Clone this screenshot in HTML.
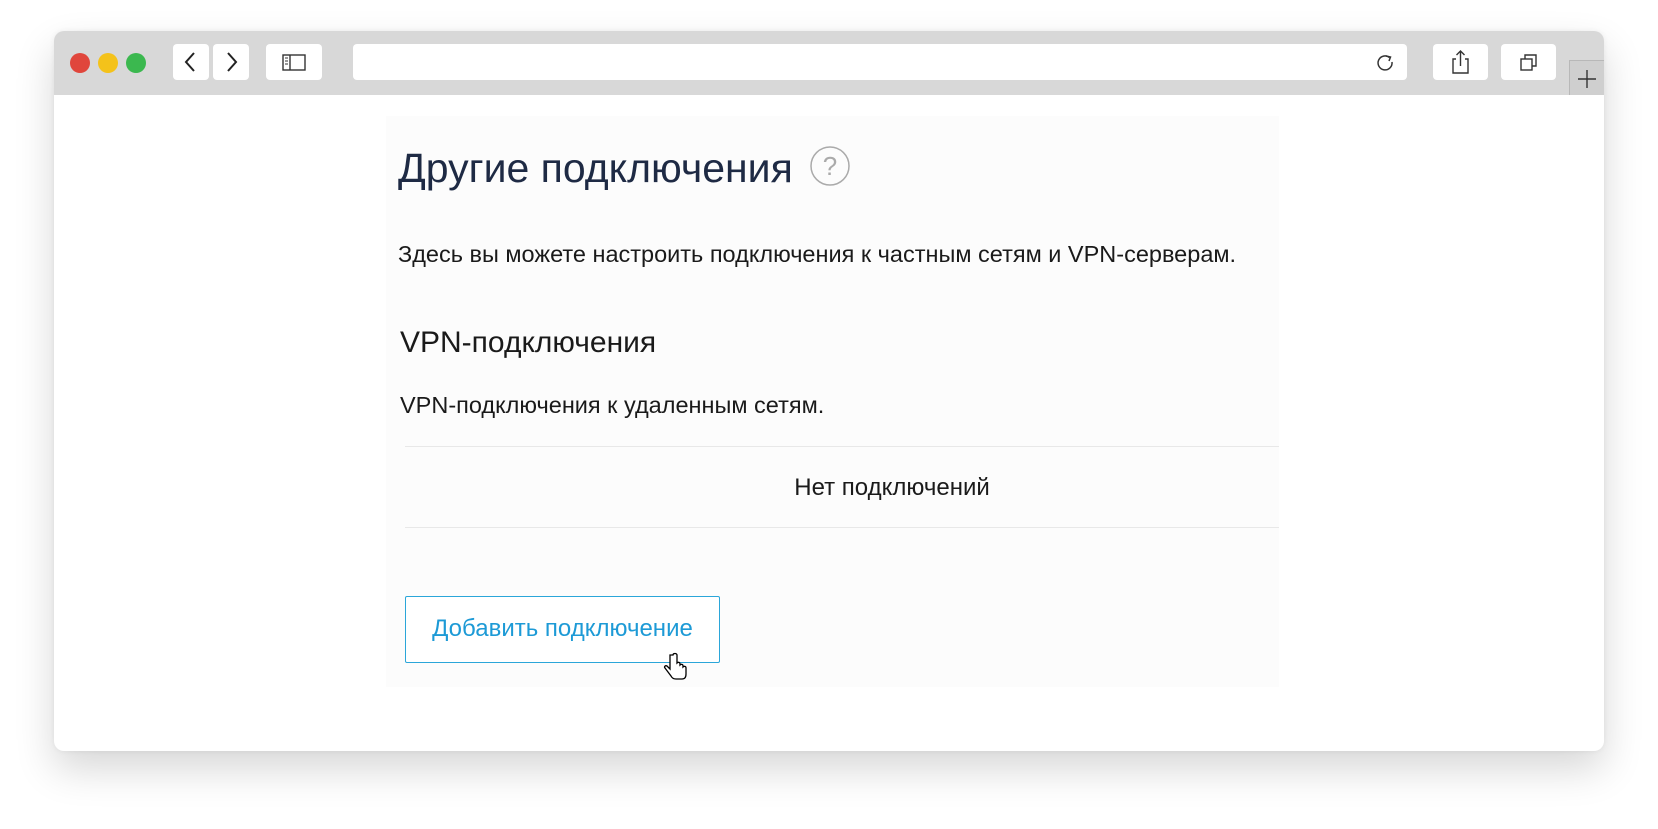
<!DOCTYPE html>
<html><head><meta charset="utf-8"><style>
*{margin:0;padding:0;box-sizing:border-box}
body{width:1658px;height:829px;background:#fff;position:relative;overflow:hidden;font-family:"Liberation Sans",sans-serif}
.win{position:absolute;left:54px;top:31px;width:1550px;height:720px;background:#fff;border-radius:10px;box-shadow:0 18px 40px rgba(0,0,0,.16),0 0 6px rgba(0,0,0,.06);overflow:hidden}
.bar{position:absolute;left:0;top:0;width:100%;height:64px;background:#d8d8d8}
.dot{position:absolute;top:22px;width:20px;height:20px;border-radius:50%}
.btn{position:absolute;top:13px;height:36px;background:#fff;border-radius:4px}
.panel{position:absolute;left:332px;top:85px;width:893px;height:571px;background:#fcfcfc}
.t{position:absolute;color:#1a1a1a;white-space:nowrap}
.line{position:absolute;left:351px;width:874px;height:1px;background:#e8e8e8}
</style></head><body>
<div class="win">
 <div class="bar">
  <div class="dot" style="left:16px;background:#e0463c"></div>
  <div class="dot" style="left:44px;background:#f4c21a"></div>
  <div class="dot" style="left:72px;background:#3bb84f"></div>
  <div class="btn" style="left:119px;width:36px"><svg width="36" height="36"><path d="M21 9 L13 18 L21 27" stroke="#222" stroke-width="2" fill="none"/></svg></div>
  <div class="btn" style="left:159px;width:36px"><svg width="36" height="36"><path d="M15 9 L23 18 L15 27" stroke="#222" stroke-width="2" fill="none"/></svg></div>
  <div class="btn" style="left:212px;width:56px"><svg width="56" height="36"><rect x="17" y="11" width="22" height="15" stroke="#333" stroke-width="1.4" fill="none"/><line x1="24" y1="11" x2="24" y2="26" stroke="#333" stroke-width="1.4"/><path d="M19 14h3M19 17h3M19 20h3" stroke="#333" stroke-width="1"/></svg></div>
  <div class="btn" style="left:299px;width:1054px"><svg style="position:absolute;right:12px;top:8px" width="20" height="20"><path d="M14.5 5.5 A7 7 0 1 0 17 10" stroke="#333" stroke-width="1.5" fill="none"/><path d="M11 4 L15.5 5 L14 9" stroke="#333" stroke-width="1.5" fill="none"/></svg></div>
  <div class="btn" style="left:1379px;width:55px"><svg width="55" height="36"><path d="M23 15h-3v14h15v-14h-3" stroke="#333" stroke-width="1.4" fill="none"/><path d="M27.5 22V7M23.5 11l4-4 4 4" stroke="#333" stroke-width="1.4" fill="none"/></svg></div>
  <div class="btn" style="left:1447px;width:55px"><svg width="55" height="36"><rect x="20" y="15" width="11" height="11" stroke="#333" stroke-width="1.4" fill="none"/><path d="M24 15v-4h11v11h-4" stroke="#333" stroke-width="1.4" fill="none"/></svg></div>
  <div style="position:absolute;left:1515px;top:29px;width:35px;height:35px;background:#cfcfcf;border-left:1px solid #b8b8b8;border-top:1px solid #b8b8b8"><svg width="35" height="35"><path d="M17 9v18M8 18h18" stroke="#333" stroke-width="1.4"/></svg></div>
 </div>
 <div class="panel"></div>
 <div class="t" style="left:344px;top:114px;font-size:41px;color:#1e2a44">Другие подключения</div>
 <svg style="position:absolute;left:755px;top:114px" width="42" height="42"><circle cx="21" cy="21" r="19" stroke="#aaa" stroke-width="1.5" fill="none"/><text x="21" y="30" font-size="26" text-anchor="middle" fill="#aaa" font-family="Liberation Sans">?</text></svg>
 <div class="t" style="left:344px;top:210px;font-size:23.5px">Здесь вы можете настроить подключения к частным сетям и VPN-серверам.</div>
 <div class="t" style="left:346px;top:295px;font-size:30px">VPN-подключения</div>
 <div class="t" style="left:346px;top:361px;font-size:23.5px">VPN-подключения к удаленным сетям.</div>
 <div class="line" style="top:415px"></div>
 <div class="t" style="left:688px;width:300px;text-align:center;top:443px;font-size:24px">Нет подключений</div>
 <div class="line" style="top:496px"></div>
 <div style="position:absolute;left:351px;top:565px;width:315px;height:67px;border:1.5px solid #2ba6d9;border-radius:2px;color:#1d9ad6;font-size:24px;line-height:64px;text-align:center;background:#fff">Добавить подключение</div>
 <svg style="position:absolute;left:608px;top:621px" width="30" height="32"><path d="M8 3 v14 l-3-3 c-2-1-3 1-2 2 l6 8 c1 2 3 3 5 3 h6 c3 0 4-2 4-5 v-6 c0-2-2-2-3-1 v-1 c0-2-2-2-3-1 v-1 c0-2-2-2-3-1 V3 c0-2-4-2-4 0z" fill="#fff" stroke="#000" stroke-width="1.3"/></svg>
</div>
</body></html>
